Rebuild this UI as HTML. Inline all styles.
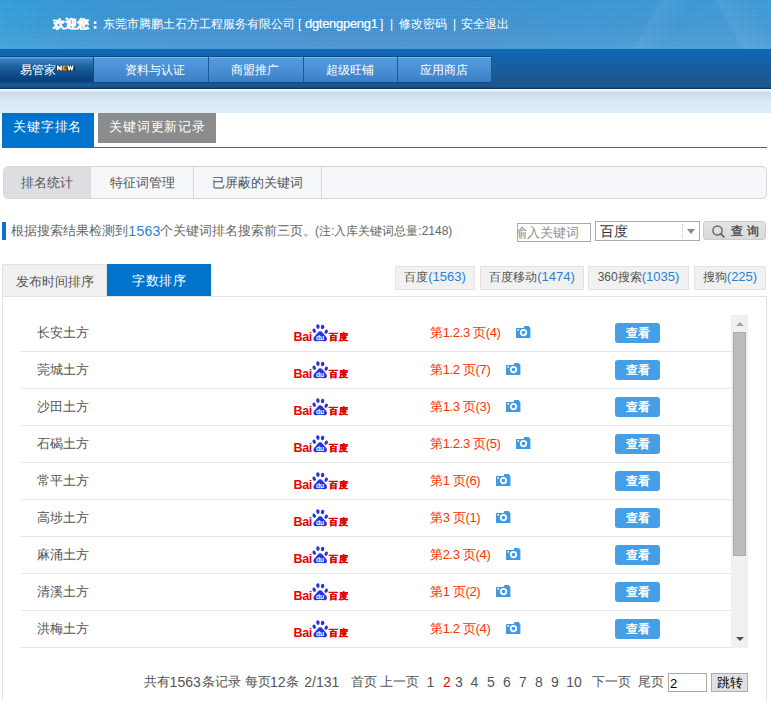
<!DOCTYPE html>
<html><head><meta charset="utf-8">
<style>
*{margin:0;padding:0;box-sizing:border-box}
html,body{width:771px;height:701px;overflow:hidden;background:#fff;font-family:"Liberation Sans",sans-serif;font-size:13px;color:#555}
.a{position:absolute;white-space:nowrap}
#hdr{left:0;top:0;width:771px;height:49px;background:linear-gradient(180deg,rgba(10,150,235,.16) 0%,rgba(255,255,255,0) 55%,rgba(255,255,255,.07) 100%),linear-gradient(90deg,#2b9bd7 0%,#3193d2 8%,#378dcf 25%,#3a8bcd 45%,#398ccd 62%,#3591d1 75%,#3893d2 88%,#3995d4 100%)}
#hdr .hl{left:620px;top:0;width:151px;height:49px;background:linear-gradient(118deg,transparent 0%,transparent 22%,rgba(255,255,255,.05) 24%,transparent 40%,transparent 100%),linear-gradient(62deg,transparent 0%,transparent 68%,rgba(255,255,255,.06) 70%,transparent 90%)}
#hdr .grid{left:0;top:0;width:771px;height:49px;background-image:linear-gradient(90deg,rgba(255,255,255,.06) 1px,transparent 1px),linear-gradient(0deg,rgba(255,255,255,.06) 1px,transparent 1px);background-size:2px 2px}
#hdr .t{top:16px;color:#fff;font-size:12px;line-height:16px}
#nav{left:0;top:49px;width:771px;height:40px;background:linear-gradient(180deg,#0f68b2 0px,#0f66af 6px,#1a5c9a 22px,#1e5589 38px,#0a3e74 39px)}
#tabs{left:0;top:7px;width:492px;height:27px;background:#0b4a86}
.tab{top:8px;height:25px;line-height:26px;text-indent:-2px;text-align:center;color:#fff;font-size:12px;background:linear-gradient(180deg,#7ab8f0 0px,#7ab8f0 1px,#549bde 1px,#4a90d6 12px,#3c7fc3 25px);border-right:1px solid #1b5a95}
.tab.act{left:0;width:93px;height:24px;line-height:21px;border-right:0;background:linear-gradient(180deg,#5fa2e0 0px,#5fa2e0 1px,#3a82c8 2px,#22679f 8px,#0f4f8c 16px,#063f7b 24px)}
#band{left:0;top:89px;width:771px;height:24px;background:linear-gradient(180deg,#f0f6fc 0px,#eef5fc 2px,#c9d8e6 3px,#d3e2f0 7px,#dae9f8 13px,#deedfc 24px)}
.kt{top:113px;height:35px;line-height:27px;color:#fff;font-size:13px;letter-spacing:.85px;text-align:center}
#bline{left:2px;top:147px;width:765px;height:1px;background:#0a74cc}
#sub{left:3px;top:166px;width:764px;height:33px;border:1px solid #d6d6d6;border-radius:5px;background:#f5f7fa;overflow:hidden}
#sub .st{position:absolute;top:0;height:31px;line-height:31px;text-align:center;color:#555;font-size:13px;border-right:1px solid #d9d9d9}
#ibar{left:2px;top:222px;width:4px;height:18px;background:#0a74cc}
.inf{top:222px;line-height:18px;color:#666}
.n{letter-spacing:.8px}
#srch{left:517px;top:223px;width:74px;height:19px;border:1px solid #a9a9a9;overflow:hidden;background:#fff}
#srch span{position:absolute;left:-4px;top:1px;font-size:12.6px;line-height:16px;color:#8f8f8f;white-space:nowrap}
#sel{left:595px;top:221px;width:105px;height:20px;border:1px solid #a9a9a9;background:#fff}
#sel span{position:absolute;left:4px;top:1px;font-size:14px;line-height:17px;color:#333}
#sel i{position:absolute;left:86px;top:2px;width:1px;height:14px;border-left:1px dotted #c4c4c4}
#sel em{position:absolute;left:91px;top:7px;width:0;height:0;border-left:4px solid transparent;border-right:4px solid transparent;border-top:5px solid #888}
#qbtn{left:703px;top:221px;width:63px;height:19px;border:1px solid #cdcdcd;border-radius:3px;background:linear-gradient(180deg,#e4e4e4,#d9d9d9)}
#qbtn span{position:absolute;top:1px;font-size:11.5px;line-height:16px;font-weight:bold;color:#555}
.ot{top:264px;height:32px;line-height:33px;text-align:center;font-size:13px}
#box{left:2px;top:296px;width:765px;height:420px;border:1px solid #e2e2e2}
.eb{top:266px;height:24px;line-height:20px;border:1px solid #e3e3e3;background:#f1f1f1;font-size:12px;color:#555;text-align:center}
.eb b{font-weight:normal;color:#2a7fd4;font-size:13px}
#list{left:21px;top:315px;width:727px;height:333px;overflow:hidden}
.row{position:absolute;left:0;width:710px;height:37px;border-bottom:1px solid #e6e6e6}
.row .kw{position:absolute;left:16px;top:0;line-height:36px;font-size:13px;color:#555;white-space:nowrap}
.row .bd{position:absolute;left:271px;top:9px}
.row .rk{position:absolute;left:409px;top:0;line-height:36px;font-size:13px;color:#ff3300;white-space:nowrap;letter-spacing:-.35px}
.row .cam{position:absolute;top:11px}
.row .vb{position:absolute;left:594px;top:8px;width:45px;height:20px;border-radius:3px;background:#459fe6;color:#fff;font-weight:bold;font-size:11.5px;line-height:20px;text-align:center}
#sb{left:710px;top:0;width:17px;height:333px;background:#f0f0f0}
.pg{top:673px;line-height:18px;color:#555}
#pin{left:668px;top:673px;width:39px;height:19px;border:1px solid #a9a9a9;background:#fff;font-size:13px;line-height:19px;padding-left:1px;color:#000}
#jbtn{left:711px;top:673px;width:37px;height:19px;border:1px solid #adadad;background:#e1e1e1;font-size:13px;line-height:17px;text-align:center;color:#000}
</style></head>
<body>
<div id="hdr" class="a"><div class="hl a"></div><div class="grid a"></div>
<span class="t a" style="left:53px;font-weight:bold;-webkit-text-stroke:.35px #fff">欢迎您：</span>
<span class="t a" style="left:103px">东莞市腾鹏土石方工程服务有限公司</span>
<span class="t a" style="left:298px">[</span>
<span class="t a" style="left:305px;font-size:13px;letter-spacing:-.3px;-webkit-text-stroke:.2px #fff">dgtengpeng1</span>
<span class="t a" style="left:380px">]</span>
<span class="t a" style="left:390px;color:#fff">|</span>
<span class="t a" style="left:399px">修改密码</span>
<span class="t a" style="left:453px;color:#fff">|</span>
<span class="t a" style="left:461px">安全退出</span>
</div>
<div id="nav" class="a"><div id="tabs" class="a"></div>
<div class="tab act a"><span style="position:absolute;left:19.5px;top:3.3px;line-height:20px;text-indent:0">易管家</span><svg style="position:absolute;left:56px;top:8px" width="19" height="6" viewBox="0 0 19 6"><rect x="0" y="0" width="19" height="6" rx="1" fill="#1b2a3a" opacity=".8"/><path d="M1 5.5V.5h1.6l1.7 2.5V.5H5.8v5H4.3L2.5 3v2.5z" fill="#fff"/><path d="M6.5 .5h4.2v1.3H8.1v.6h2.4v1.2H8.1v.6h2.7v1.3H6.5z" fill="#f0a010"/><path d="M11.2 .5h1.5l.5 2.6.7-2.6h1.1l.7 2.6.5-2.6h1.5l-1.2 5h-1.3l-.7-2.3-.7 2.3h-1.3z" fill="#fff"/></svg></div>
<div class="tab a" style="left:94px;width:115px;padding-left:9px">资料与认证</div>
<div class="tab a" style="left:209px;width:95px">商盟推广</div>
<div class="tab a" style="left:304px;width:94px">超级旺铺</div>
<div class="tab a" style="left:398px;width:94px">应用商店</div>
</div>
<div id="band" class="a"></div>
<div class="kt a" style="left:2px;width:92px;background:#0074cc;text-align:left;padding-left:11px">关键字排名</div>
<div class="kt a" style="left:98px;width:118px;height:30px;background:#8c8c8c;text-align:left;padding-left:11px">关键词更新记录</div>
<div id="bline" class="a"></div>
<div id="sub" class="a">
<div class="st" style="left:0;width:87px;background:#dddee1">排名统计</div>
<div class="st" style="left:87px;width:103px">特征词管理</div>
<div class="st" style="left:190px;width:128px">已屏蔽的关键词</div>
</div>
<div id="ibar" class="a"></div>
<span class="a inf" style="left:11px;font-size:12.67px">根据搜索结果检测到</span>
<span class="a inf" style="left:128.3px;font-size:14px;letter-spacing:.3px;color:#2a7fd4">1563</span>
<span class="a inf" style="left:159.5px;font-size:12.67px">个关键词排名搜索前三页。</span>
<span class="a inf" style="left:315px;font-size:12px">(注:入库关键词总量:2148)</span>
<div id="srch" class="a"><span>输入关键词</span></div>
<div id="sel" class="a"><span>百度</span><i></i><em></em></div>
<div id="qbtn" class="a"><svg style="position:absolute;left:8px;top:2px" width="14" height="14" viewBox="0 0 14 14"><circle cx="5.5" cy="6.5" r="4.6" fill="none" stroke="#6a6a6a" stroke-width="1.5"/><line x1="8.6" y1="9.7" x2="11.8" y2="12.9" stroke="#6a6a6a" stroke-width="1.9" stroke-linecap="round"/></svg><span style="left:27px">查</span><span style="left:42.5px">询</span></div>
<div id="box" class="a"></div>
<div class="ot a" style="left:2px;width:105px;background:#f0f0f0;border:1px solid #e2e2e2;border-bottom:0;color:#555">发布时间排序</div>
<div class="ot a" style="left:107px;width:104px;background:#0074cc;color:#fff;letter-spacing:.8px;text-indent:.8px">字数排序</div>
<div class="eb a" style="left:395px;width:80px">百度<b>(1563)</b></div>
<div class="eb a" style="left:480px;width:104px">百度移动<b>(1474)</b></div>
<div class="eb a" style="left:588px;width:101px">360搜索<b>(1035)</b></div>
<div class="eb a" style="left:694px;width:72px">搜狗<b>(225)</b></div>
<div id="list" class="a">
<div class="row" style="top:0px"><span class="kw">长安土方</span><svg class="bd" width="58" height="19" viewBox="0 0 58 19"><text x="1.6" y="17.3" font-family="Liberation Sans" font-weight="bold" font-size="12.5" fill="#e10602" letter-spacing="-.35">Bai</text><g fill="#2932e1"><ellipse cx="22.2" cy="6.7" rx="1.6" ry="2.2" transform="rotate(-28 22.2 6.7)"/><ellipse cx="25.9" cy="2.6" rx="1.7" ry="2.3" transform="rotate(-8 25.9 2.6)"/><ellipse cx="30.6" cy="3" rx="1.7" ry="2.3" transform="rotate(8 30.6 3)"/><ellipse cx="34.2" cy="7.7" rx="1.6" ry="2.2" transform="rotate(28 34.2 7.7)"/><path d="M28.2 7.2c-1.8 0-2.8 2-3.9 3.3-1.1 1.3-2.9 2.6-2.9 4.4 0 1.6 1.3 2.3 2.8 2.3 1.4 0 2.6-.4 4-.4s2.6.4 4 .4c1.5 0 2.8-.7 2.8-2.3 0-1.8-1.8-3.1-2.9-4.4-1.1-1.3-2.1-3.3-3.9-3.3z"/></g><text x="24" y="15.6" font-family="Liberation Sans" font-weight="bold" font-size="6.8" fill="#fff" letter-spacing="-.2">du</text><text x="37" y="16.1" font-weight="bold" font-size="9.3" fill="#e10602" stroke="#e10602" stroke-width=".35" letter-spacing=".5">百度</text></svg><span class="rk">第1.2.3 页(4)</span><svg class="cam" style="left:495px" width="15" height="12" viewBox="0 0 15 12"><path d="M0.6 2h6.9l.9-2h4.4l.8 1.3.8.7v9.4c0 .4-.2.6-.6.6H.6c-.4 0-.6-.2-.6-.6V2.6c0-.4.2-.6.6-.6z" fill="#3f9ae3"/><circle cx="7.5" cy="6.6" r="3.6" fill="#fff"/><circle cx="7.5" cy="6.6" r="1.8" fill="#3f9ae3"/><rect x="1.5" y="3" width="1.5" height="1.7" fill="#fff"/></svg><span class="vb">查看</span></div>
<div class="row" style="top:37px"><span class="kw">莞城土方</span><svg class="bd" width="58" height="19" viewBox="0 0 58 19"><text x="1.6" y="17.3" font-family="Liberation Sans" font-weight="bold" font-size="12.5" fill="#e10602" letter-spacing="-.35">Bai</text><g fill="#2932e1"><ellipse cx="22.2" cy="6.7" rx="1.6" ry="2.2" transform="rotate(-28 22.2 6.7)"/><ellipse cx="25.9" cy="2.6" rx="1.7" ry="2.3" transform="rotate(-8 25.9 2.6)"/><ellipse cx="30.6" cy="3" rx="1.7" ry="2.3" transform="rotate(8 30.6 3)"/><ellipse cx="34.2" cy="7.7" rx="1.6" ry="2.2" transform="rotate(28 34.2 7.7)"/><path d="M28.2 7.2c-1.8 0-2.8 2-3.9 3.3-1.1 1.3-2.9 2.6-2.9 4.4 0 1.6 1.3 2.3 2.8 2.3 1.4 0 2.6-.4 4-.4s2.6.4 4 .4c1.5 0 2.8-.7 2.8-2.3 0-1.8-1.8-3.1-2.9-4.4-1.1-1.3-2.1-3.3-3.9-3.3z"/></g><text x="24" y="15.6" font-family="Liberation Sans" font-weight="bold" font-size="6.8" fill="#fff" letter-spacing="-.2">du</text><text x="37" y="16.1" font-weight="bold" font-size="9.3" fill="#e10602" stroke="#e10602" stroke-width=".35" letter-spacing=".5">百度</text></svg><span class="rk">第1.2 页(7)</span><svg class="cam" style="left:485px" width="15" height="12" viewBox="0 0 15 12"><path d="M0.6 2h6.9l.9-2h4.4l.8 1.3.8.7v9.4c0 .4-.2.6-.6.6H.6c-.4 0-.6-.2-.6-.6V2.6c0-.4.2-.6.6-.6z" fill="#3f9ae3"/><circle cx="7.5" cy="6.6" r="3.6" fill="#fff"/><circle cx="7.5" cy="6.6" r="1.8" fill="#3f9ae3"/><rect x="1.5" y="3" width="1.5" height="1.7" fill="#fff"/></svg><span class="vb">查看</span></div>
<div class="row" style="top:74px"><span class="kw">沙田土方</span><svg class="bd" width="58" height="19" viewBox="0 0 58 19"><text x="1.6" y="17.3" font-family="Liberation Sans" font-weight="bold" font-size="12.5" fill="#e10602" letter-spacing="-.35">Bai</text><g fill="#2932e1"><ellipse cx="22.2" cy="6.7" rx="1.6" ry="2.2" transform="rotate(-28 22.2 6.7)"/><ellipse cx="25.9" cy="2.6" rx="1.7" ry="2.3" transform="rotate(-8 25.9 2.6)"/><ellipse cx="30.6" cy="3" rx="1.7" ry="2.3" transform="rotate(8 30.6 3)"/><ellipse cx="34.2" cy="7.7" rx="1.6" ry="2.2" transform="rotate(28 34.2 7.7)"/><path d="M28.2 7.2c-1.8 0-2.8 2-3.9 3.3-1.1 1.3-2.9 2.6-2.9 4.4 0 1.6 1.3 2.3 2.8 2.3 1.4 0 2.6-.4 4-.4s2.6.4 4 .4c1.5 0 2.8-.7 2.8-2.3 0-1.8-1.8-3.1-2.9-4.4-1.1-1.3-2.1-3.3-3.9-3.3z"/></g><text x="24" y="15.6" font-family="Liberation Sans" font-weight="bold" font-size="6.8" fill="#fff" letter-spacing="-.2">du</text><text x="37" y="16.1" font-weight="bold" font-size="9.3" fill="#e10602" stroke="#e10602" stroke-width=".35" letter-spacing=".5">百度</text></svg><span class="rk">第1.3 页(3)</span><svg class="cam" style="left:485px" width="15" height="12" viewBox="0 0 15 12"><path d="M0.6 2h6.9l.9-2h4.4l.8 1.3.8.7v9.4c0 .4-.2.6-.6.6H.6c-.4 0-.6-.2-.6-.6V2.6c0-.4.2-.6.6-.6z" fill="#3f9ae3"/><circle cx="7.5" cy="6.6" r="3.6" fill="#fff"/><circle cx="7.5" cy="6.6" r="1.8" fill="#3f9ae3"/><rect x="1.5" y="3" width="1.5" height="1.7" fill="#fff"/></svg><span class="vb">查看</span></div>
<div class="row" style="top:111px"><span class="kw">石碣土方</span><svg class="bd" width="58" height="19" viewBox="0 0 58 19"><text x="1.6" y="17.3" font-family="Liberation Sans" font-weight="bold" font-size="12.5" fill="#e10602" letter-spacing="-.35">Bai</text><g fill="#2932e1"><ellipse cx="22.2" cy="6.7" rx="1.6" ry="2.2" transform="rotate(-28 22.2 6.7)"/><ellipse cx="25.9" cy="2.6" rx="1.7" ry="2.3" transform="rotate(-8 25.9 2.6)"/><ellipse cx="30.6" cy="3" rx="1.7" ry="2.3" transform="rotate(8 30.6 3)"/><ellipse cx="34.2" cy="7.7" rx="1.6" ry="2.2" transform="rotate(28 34.2 7.7)"/><path d="M28.2 7.2c-1.8 0-2.8 2-3.9 3.3-1.1 1.3-2.9 2.6-2.9 4.4 0 1.6 1.3 2.3 2.8 2.3 1.4 0 2.6-.4 4-.4s2.6.4 4 .4c1.5 0 2.8-.7 2.8-2.3 0-1.8-1.8-3.1-2.9-4.4-1.1-1.3-2.1-3.3-3.9-3.3z"/></g><text x="24" y="15.6" font-family="Liberation Sans" font-weight="bold" font-size="6.8" fill="#fff" letter-spacing="-.2">du</text><text x="37" y="16.1" font-weight="bold" font-size="9.3" fill="#e10602" stroke="#e10602" stroke-width=".35" letter-spacing=".5">百度</text></svg><span class="rk">第1.2.3 页(5)</span><svg class="cam" style="left:495px" width="15" height="12" viewBox="0 0 15 12"><path d="M0.6 2h6.9l.9-2h4.4l.8 1.3.8.7v9.4c0 .4-.2.6-.6.6H.6c-.4 0-.6-.2-.6-.6V2.6c0-.4.2-.6.6-.6z" fill="#3f9ae3"/><circle cx="7.5" cy="6.6" r="3.6" fill="#fff"/><circle cx="7.5" cy="6.6" r="1.8" fill="#3f9ae3"/><rect x="1.5" y="3" width="1.5" height="1.7" fill="#fff"/></svg><span class="vb">查看</span></div>
<div class="row" style="top:148px"><span class="kw">常平土方</span><svg class="bd" width="58" height="19" viewBox="0 0 58 19"><text x="1.6" y="17.3" font-family="Liberation Sans" font-weight="bold" font-size="12.5" fill="#e10602" letter-spacing="-.35">Bai</text><g fill="#2932e1"><ellipse cx="22.2" cy="6.7" rx="1.6" ry="2.2" transform="rotate(-28 22.2 6.7)"/><ellipse cx="25.9" cy="2.6" rx="1.7" ry="2.3" transform="rotate(-8 25.9 2.6)"/><ellipse cx="30.6" cy="3" rx="1.7" ry="2.3" transform="rotate(8 30.6 3)"/><ellipse cx="34.2" cy="7.7" rx="1.6" ry="2.2" transform="rotate(28 34.2 7.7)"/><path d="M28.2 7.2c-1.8 0-2.8 2-3.9 3.3-1.1 1.3-2.9 2.6-2.9 4.4 0 1.6 1.3 2.3 2.8 2.3 1.4 0 2.6-.4 4-.4s2.6.4 4 .4c1.5 0 2.8-.7 2.8-2.3 0-1.8-1.8-3.1-2.9-4.4-1.1-1.3-2.1-3.3-3.9-3.3z"/></g><text x="24" y="15.6" font-family="Liberation Sans" font-weight="bold" font-size="6.8" fill="#fff" letter-spacing="-.2">du</text><text x="37" y="16.1" font-weight="bold" font-size="9.3" fill="#e10602" stroke="#e10602" stroke-width=".35" letter-spacing=".5">百度</text></svg><span class="rk">第1 页(6)</span><svg class="cam" style="left:475px" width="15" height="12" viewBox="0 0 15 12"><path d="M0.6 2h6.9l.9-2h4.4l.8 1.3.8.7v9.4c0 .4-.2.6-.6.6H.6c-.4 0-.6-.2-.6-.6V2.6c0-.4.2-.6.6-.6z" fill="#3f9ae3"/><circle cx="7.5" cy="6.6" r="3.6" fill="#fff"/><circle cx="7.5" cy="6.6" r="1.8" fill="#3f9ae3"/><rect x="1.5" y="3" width="1.5" height="1.7" fill="#fff"/></svg><span class="vb">查看</span></div>
<div class="row" style="top:185px"><span class="kw">高埗土方</span><svg class="bd" width="58" height="19" viewBox="0 0 58 19"><text x="1.6" y="17.3" font-family="Liberation Sans" font-weight="bold" font-size="12.5" fill="#e10602" letter-spacing="-.35">Bai</text><g fill="#2932e1"><ellipse cx="22.2" cy="6.7" rx="1.6" ry="2.2" transform="rotate(-28 22.2 6.7)"/><ellipse cx="25.9" cy="2.6" rx="1.7" ry="2.3" transform="rotate(-8 25.9 2.6)"/><ellipse cx="30.6" cy="3" rx="1.7" ry="2.3" transform="rotate(8 30.6 3)"/><ellipse cx="34.2" cy="7.7" rx="1.6" ry="2.2" transform="rotate(28 34.2 7.7)"/><path d="M28.2 7.2c-1.8 0-2.8 2-3.9 3.3-1.1 1.3-2.9 2.6-2.9 4.4 0 1.6 1.3 2.3 2.8 2.3 1.4 0 2.6-.4 4-.4s2.6.4 4 .4c1.5 0 2.8-.7 2.8-2.3 0-1.8-1.8-3.1-2.9-4.4-1.1-1.3-2.1-3.3-3.9-3.3z"/></g><text x="24" y="15.6" font-family="Liberation Sans" font-weight="bold" font-size="6.8" fill="#fff" letter-spacing="-.2">du</text><text x="37" y="16.1" font-weight="bold" font-size="9.3" fill="#e10602" stroke="#e10602" stroke-width=".35" letter-spacing=".5">百度</text></svg><span class="rk">第3 页(1)</span><svg class="cam" style="left:475px" width="15" height="12" viewBox="0 0 15 12"><path d="M0.6 2h6.9l.9-2h4.4l.8 1.3.8.7v9.4c0 .4-.2.6-.6.6H.6c-.4 0-.6-.2-.6-.6V2.6c0-.4.2-.6.6-.6z" fill="#3f9ae3"/><circle cx="7.5" cy="6.6" r="3.6" fill="#fff"/><circle cx="7.5" cy="6.6" r="1.8" fill="#3f9ae3"/><rect x="1.5" y="3" width="1.5" height="1.7" fill="#fff"/></svg><span class="vb">查看</span></div>
<div class="row" style="top:222px"><span class="kw">麻涌土方</span><svg class="bd" width="58" height="19" viewBox="0 0 58 19"><text x="1.6" y="17.3" font-family="Liberation Sans" font-weight="bold" font-size="12.5" fill="#e10602" letter-spacing="-.35">Bai</text><g fill="#2932e1"><ellipse cx="22.2" cy="6.7" rx="1.6" ry="2.2" transform="rotate(-28 22.2 6.7)"/><ellipse cx="25.9" cy="2.6" rx="1.7" ry="2.3" transform="rotate(-8 25.9 2.6)"/><ellipse cx="30.6" cy="3" rx="1.7" ry="2.3" transform="rotate(8 30.6 3)"/><ellipse cx="34.2" cy="7.7" rx="1.6" ry="2.2" transform="rotate(28 34.2 7.7)"/><path d="M28.2 7.2c-1.8 0-2.8 2-3.9 3.3-1.1 1.3-2.9 2.6-2.9 4.4 0 1.6 1.3 2.3 2.8 2.3 1.4 0 2.6-.4 4-.4s2.6.4 4 .4c1.5 0 2.8-.7 2.8-2.3 0-1.8-1.8-3.1-2.9-4.4-1.1-1.3-2.1-3.3-3.9-3.3z"/></g><text x="24" y="15.6" font-family="Liberation Sans" font-weight="bold" font-size="6.8" fill="#fff" letter-spacing="-.2">du</text><text x="37" y="16.1" font-weight="bold" font-size="9.3" fill="#e10602" stroke="#e10602" stroke-width=".35" letter-spacing=".5">百度</text></svg><span class="rk">第2.3 页(4)</span><svg class="cam" style="left:485px" width="15" height="12" viewBox="0 0 15 12"><path d="M0.6 2h6.9l.9-2h4.4l.8 1.3.8.7v9.4c0 .4-.2.6-.6.6H.6c-.4 0-.6-.2-.6-.6V2.6c0-.4.2-.6.6-.6z" fill="#3f9ae3"/><circle cx="7.5" cy="6.6" r="3.6" fill="#fff"/><circle cx="7.5" cy="6.6" r="1.8" fill="#3f9ae3"/><rect x="1.5" y="3" width="1.5" height="1.7" fill="#fff"/></svg><span class="vb">查看</span></div>
<div class="row" style="top:259px"><span class="kw">清溪土方</span><svg class="bd" width="58" height="19" viewBox="0 0 58 19"><text x="1.6" y="17.3" font-family="Liberation Sans" font-weight="bold" font-size="12.5" fill="#e10602" letter-spacing="-.35">Bai</text><g fill="#2932e1"><ellipse cx="22.2" cy="6.7" rx="1.6" ry="2.2" transform="rotate(-28 22.2 6.7)"/><ellipse cx="25.9" cy="2.6" rx="1.7" ry="2.3" transform="rotate(-8 25.9 2.6)"/><ellipse cx="30.6" cy="3" rx="1.7" ry="2.3" transform="rotate(8 30.6 3)"/><ellipse cx="34.2" cy="7.7" rx="1.6" ry="2.2" transform="rotate(28 34.2 7.7)"/><path d="M28.2 7.2c-1.8 0-2.8 2-3.9 3.3-1.1 1.3-2.9 2.6-2.9 4.4 0 1.6 1.3 2.3 2.8 2.3 1.4 0 2.6-.4 4-.4s2.6.4 4 .4c1.5 0 2.8-.7 2.8-2.3 0-1.8-1.8-3.1-2.9-4.4-1.1-1.3-2.1-3.3-3.9-3.3z"/></g><text x="24" y="15.6" font-family="Liberation Sans" font-weight="bold" font-size="6.8" fill="#fff" letter-spacing="-.2">du</text><text x="37" y="16.1" font-weight="bold" font-size="9.3" fill="#e10602" stroke="#e10602" stroke-width=".35" letter-spacing=".5">百度</text></svg><span class="rk">第1 页(2)</span><svg class="cam" style="left:475px" width="15" height="12" viewBox="0 0 15 12"><path d="M0.6 2h6.9l.9-2h4.4l.8 1.3.8.7v9.4c0 .4-.2.6-.6.6H.6c-.4 0-.6-.2-.6-.6V2.6c0-.4.2-.6.6-.6z" fill="#3f9ae3"/><circle cx="7.5" cy="6.6" r="3.6" fill="#fff"/><circle cx="7.5" cy="6.6" r="1.8" fill="#3f9ae3"/><rect x="1.5" y="3" width="1.5" height="1.7" fill="#fff"/></svg><span class="vb">查看</span></div>
<div class="row" style="top:296px"><span class="kw">洪梅土方</span><svg class="bd" width="58" height="19" viewBox="0 0 58 19"><text x="1.6" y="17.3" font-family="Liberation Sans" font-weight="bold" font-size="12.5" fill="#e10602" letter-spacing="-.35">Bai</text><g fill="#2932e1"><ellipse cx="22.2" cy="6.7" rx="1.6" ry="2.2" transform="rotate(-28 22.2 6.7)"/><ellipse cx="25.9" cy="2.6" rx="1.7" ry="2.3" transform="rotate(-8 25.9 2.6)"/><ellipse cx="30.6" cy="3" rx="1.7" ry="2.3" transform="rotate(8 30.6 3)"/><ellipse cx="34.2" cy="7.7" rx="1.6" ry="2.2" transform="rotate(28 34.2 7.7)"/><path d="M28.2 7.2c-1.8 0-2.8 2-3.9 3.3-1.1 1.3-2.9 2.6-2.9 4.4 0 1.6 1.3 2.3 2.8 2.3 1.4 0 2.6-.4 4-.4s2.6.4 4 .4c1.5 0 2.8-.7 2.8-2.3 0-1.8-1.8-3.1-2.9-4.4-1.1-1.3-2.1-3.3-3.9-3.3z"/></g><text x="24" y="15.6" font-family="Liberation Sans" font-weight="bold" font-size="6.8" fill="#fff" letter-spacing="-.2">du</text><text x="37" y="16.1" font-weight="bold" font-size="9.3" fill="#e10602" stroke="#e10602" stroke-width=".35" letter-spacing=".5">百度</text></svg><span class="rk">第1.2 页(4)</span><svg class="cam" style="left:485px" width="15" height="12" viewBox="0 0 15 12"><path d="M0.6 2h6.9l.9-2h4.4l.8 1.3.8.7v9.4c0 .4-.2.6-.6.6H.6c-.4 0-.6-.2-.6-.6V2.6c0-.4.2-.6.6-.6z" fill="#3f9ae3"/><circle cx="7.5" cy="6.6" r="3.6" fill="#fff"/><circle cx="7.5" cy="6.6" r="1.8" fill="#3f9ae3"/><rect x="1.5" y="3" width="1.5" height="1.7" fill="#fff"/></svg><span class="vb">查看</span></div>
<div id="sb" class="a"><div style="position:absolute;left:5px;top:7px;width:0;height:0;border-left:4px solid transparent;border-right:4px solid transparent;border-bottom:4px solid #a3a3a3"></div><div style="position:absolute;left:2px;top:17px;width:13px;height:224px;background:#bcbcbc;border:1px solid #a9a9a9"></div><div style="position:absolute;left:5px;top:322px;width:0;height:0;border-left:4px solid transparent;border-right:4px solid transparent;border-top:4px solid #505050"></div></div>
</div>
<span class="a pg" style="left:144px;font-size:13px">共有</span>
<span class="a pg" style="left:169.6px;font-size:14px">1563</span>
<span class="a pg" style="left:202px;font-size:13px">条记录</span>
<span class="a pg" style="left:245px;font-size:13px">每页</span>
<span class="a pg" style="left:270px;font-size:14px">12</span>
<span class="a pg" style="left:286px;font-size:13px">条</span>
<span class="a pg" style="left:304.3px;font-size:14px">2/131</span>
<span class="a pg" style="left:350.5px;font-size:13px">首页</span>
<span class="a pg" style="left:379.5px;font-size:13px">上一页</span>
<span class="a pg" style="left:426.4px;font-size:14px">1</span>
<span class="a pg" style="left:443px;font-size:14px;color:#e00">2</span>
<span class="a pg" style="left:455px;font-size:14px">3</span>
<span class="a pg" style="left:470.6px;font-size:14px">4</span>
<span class="a pg" style="left:487px;font-size:14px">5</span>
<span class="a pg" style="left:503px;font-size:14px">6</span>
<span class="a pg" style="left:519px;font-size:14px">7</span>
<span class="a pg" style="left:535px;font-size:14px">8</span>
<span class="a pg" style="left:551px;font-size:14px">9</span>
<span class="a pg" style="left:566.2px;font-size:14px">10</span>
<span class="a pg" style="left:591.5px;font-size:13px">下一页</span>
<span class="a pg" style="left:637.5px;font-size:13px">尾页</span>
<div id="pin" class="a">2</div>
<div id="jbtn" class="a">跳转</div>
</body></html>
